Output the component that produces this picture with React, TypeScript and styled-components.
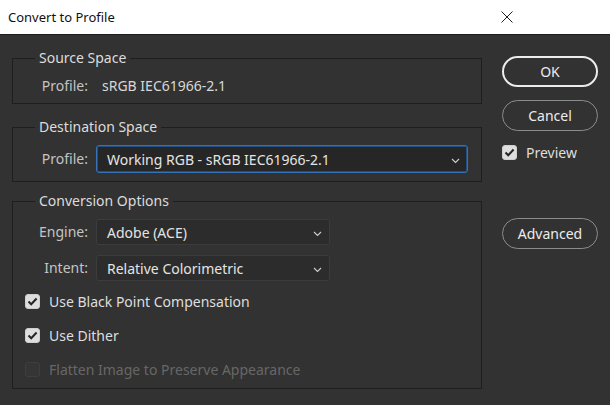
import React from 'react'
import styled, { createGlobalStyle } from 'styled-components'

const GlobalStyle = createGlobalStyle`
  html, body {
    margin: 0;
    padding: 0;
    background: #323232;
  }
  body {
    font-family: 'Noto Sans', 'Open Sans', Arial, sans-serif;
  }
`

const Window = styled.div`
  width: 610px;
  height: 405px;
  display: flex;
  flex-direction: column;
  background: #323232;
  overflow: hidden;
`

const TitleBar = styled.div`
  height: 35px;
  flex-shrink: 0;
  display: flex;
  align-items: center;
  justify-content: space-between;
  background: #ffffff;
  border-bottom: 1px solid #1c1c1c;
  padding: 0 97px 0 8px;
  box-sizing: border-box;
`

const TitleText = styled.span`
  font-size: 13px;
  color: #111;
`

const CloseIcon = styled.svg`
  width: 12px;
  height: 12px;
`

const Body = styled.div`
  flex: 1;
  display: flex;
  gap: 20px;
  padding: 21px 0 0 12px;
`

const LeftColumn = styled.div`
  width: 470px;
  display: flex;
  flex-direction: column;
  padding-top: 2px;
`

const Group = styled.div<{ $height: number; $gap: number }>`
  position: relative;
  box-sizing: border-box;
  height: ${({ $height }) => $height}px;
  margin-top: ${({ $gap }) => $gap}px;
  border: 1px solid #1e1e1e;
  padding: 17px 13px 0 16px;
  display: flex;
  flex-direction: column;
`

const GroupTitle = styled.span`
  position: absolute;
  top: -11px;
  left: 22px;
  padding: 0 4px;
  background: #323232;
  line-height: 20px;
  font-size: 14px;
  color: #dcdcdc;
`

const FieldRow = styled.div<{ $mt?: number }>`
  display: flex;
  align-items: center;
  margin-top: ${({ $mt }) => $mt ?? 0}px;
`

const Label = styled.span`
  width: 59px;
  flex-shrink: 0;
  text-align: right;
  padding-right: 8px;
  font-size: 14px;
  color: #c4c4c4;
  line-height: 20px;
`

const Value = styled.span`
  font-size: 14px;
  color: #d8d8d8;
  line-height: 20px;
  padding-left: 6px;
`

const Select = styled.div<{ $width: number; $height: number; $focused?: boolean }>`
  box-sizing: border-box;
  width: ${({ $width }) => $width}px;
  height: ${({ $height }) => $height}px;
  display: flex;
  align-items: center;
  justify-content: space-between;
  padding: 0 7px 0 10px;
  border-radius: 3px;
  background: ${({ $focused }) => ($focused ? '#262626' : '#2c2c2c')};
  border: 1px solid ${({ $focused }) => ($focused ? '#3572b8' : '#3c3c3c')};
  box-shadow: ${({ $focused }) => ($focused ? 'inset 0 0 0 1px #1f4f86' : 'none')};
  font-size: 14px;
  color: #e4e4e4;
`

const Chevron = styled.svg`
  width: 9px;
  height: 6px;
  margin-top: 3px;
`

const CheckRow = styled.label<{ $disabled?: boolean; $mt?: number }>`
  display: flex;
  align-items: center;
  gap: 9px;
  height: 20px;
  margin-top: ${({ $mt }) => $mt ?? 0}px;
  font-size: 14px;
  color: ${({ $disabled }) => ($disabled ? '#676767' : '#dedede')};
`

const CheckList = styled.div`
  display: flex;
  flex-direction: column;
  gap: 14px;
  margin: 10px 0 0 -4px;
`

const Box = styled.span<{ $checked?: boolean }>`
  box-sizing: border-box;
  width: 15px;
  height: 15px;
  flex-shrink: 0;
  border-radius: 3px;
  display: flex;
  align-items: center;
  justify-content: center;
  background: ${({ $checked }) => ($checked ? '#dedede' : '#353535')};
  border: 1px solid ${({ $checked }) => ($checked ? '#cfcfcf' : '#3e3e3e')};
`

const RightColumn = styled.div`
  width: 96px;
  display: flex;
  flex-direction: column;
`

const PillButton = styled.button<{ $primary?: boolean; $mt: number }>`
  box-sizing: border-box;
  width: 96px;
  height: 31px;
  margin-top: ${({ $mt }) => $mt}px;
  border-radius: 16px;
  background: transparent;
  border: ${({ $primary }) => ($primary ? '2px solid #ececec' : '1px solid #8c8c8c')};
  font-family: inherit;
  font-size: 14px;
  color: #ececec;
  padding: 0;
`

function Check() {
  return (
    <svg width="11" height="9" viewBox="0 0 11 9">
      <path d="M1.5 4.6 L4.2 7.2 L9.6 1.6" fill="none" stroke="#262626" strokeWidth="2.1" />
    </svg>
  )
}

function Caret() {
  return (
    <Chevron viewBox="0 0 9 6">
      <path d="M1 1 L4.5 4.5 L8 1" fill="none" stroke="#cfcfcf" strokeWidth="1.1" />
    </Chevron>
  )
}

export default function App() {
  return (
    <Window>
      <GlobalStyle />
      <TitleBar>
        <TitleText>Convert to Profile</TitleText>
        <CloseIcon viewBox="0 0 12 12">
          <path d="M0.5 0.5 L11.5 11.5 M11.5 0.5 L0.5 11.5" stroke="#222" strokeWidth="1" />
        </CloseIcon>
      </TitleBar>
      <Body>
        <LeftColumn>
          <Group $height={46} $gap={0}>
            <GroupTitle>Source Space</GroupTitle>
            <FieldRow>
              <Label>Profile:</Label>
              <Value>sRGB IEC61966-2.1</Value>
            </FieldRow>
          </Group>

          <Group $height={55} $gap={23}>
            <GroupTitle>Destination Space</GroupTitle>
            <FieldRow>
              <Label>Profile:</Label>
              <Select $width={373} $height={28} $focused>
                <span>Working RGB - sRGB IEC61966-2.1</span>
                <Caret />
              </Select>
            </FieldRow>
          </Group>

          <Group $height={188} $gap={19}>
            <GroupTitle>Conversion Options</GroupTitle>
            <FieldRow>
              <Label>Engine:</Label>
              <Select $width={234} $height={26}>
                <span>Adobe (ACE)</span>
                <Caret />
              </Select>
            </FieldRow>
            <FieldRow $mt={10}>
              <Label>Intent:</Label>
              <Select $width={234} $height={26}>
                <span>Relative Colorimetric</span>
                <Caret />
              </Select>
            </FieldRow>
            <CheckList>
              <CheckRow>
                <Box $checked><Check /></Box>
                Use Black Point Compensation
              </CheckRow>
              <CheckRow>
                <Box $checked><Check /></Box>
                Use Dither
              </CheckRow>
              <CheckRow $disabled>
                <Box />
                Flatten Image to Preserve Appearance
              </CheckRow>
            </CheckList>
          </Group>
        </LeftColumn>

        <RightColumn>
          <PillButton $primary $mt={0}>OK</PillButton>
          <PillButton $mt={13}>Cancel</PillButton>
          <CheckRow $mt={11}>
            <Box $checked><Check /></Box>
            Preview
          </CheckRow>
          <PillButton $mt={56}>Advanced</PillButton>
        </RightColumn>
      </Body>
    </Window>
  )
}
